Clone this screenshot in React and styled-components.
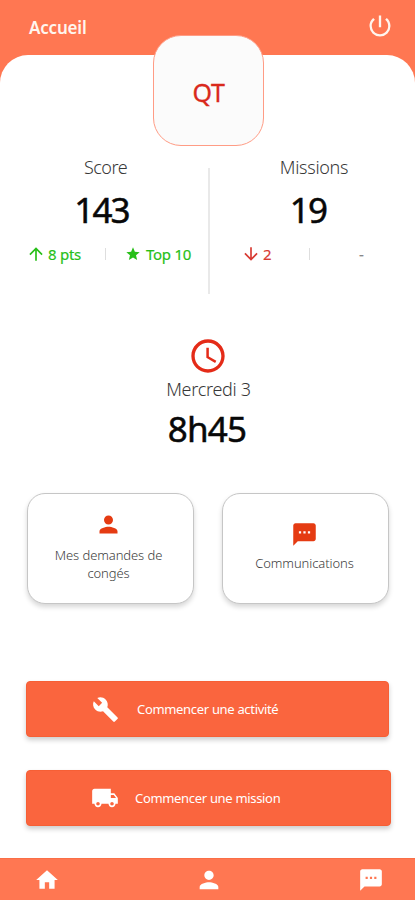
import React from "react";
import styled, { createGlobalStyle } from "styled-components";
import {
  MdPowerSettingsNew, MdArrowUpward, MdArrowDownward, MdStar, MdAccessTime,
  MdPerson, MdSms, MdBuild, MdLocalShipping, MdHome,
} from "react-icons/md";

const GlobalStyle = createGlobalStyle`
  * { box-sizing: border-box; }
  body { margin: 0; background: #fff; }
  svg { display: block; flex: none; }
`;

const Screen = styled.div`
  width: 415px;
  height: 900px;
  display: flex;
  flex-direction: column;
  background: #ff7752;
  font-family: "Noto Sans", "Open Sans", sans-serif;
  overflow: hidden;
`;

const Header = styled.header`
  height: 55px;
  flex: none;
  display: flex;
  justify-content: space-between;
  padding: 12px 21px 0 29px;
  color: #fff5ee;
`;

const Title = styled.h1`
  margin: 0;
  font-size: 17px;
  line-height: 31px;
  font-weight: 600;
  letter-spacing: -0.2px;
`;

const Sheet = styled.main`
  position: relative;
  flex: 1;
  display: flex;
  flex-direction: column;
  background: #fff;
  border-radius: 28px 28px 0 0;
`;

const Avatar = styled.div`
  position: absolute;
  top: -20px;
  left: 153px;
  width: 111px;
  height: 111px;
  display: flex;
  align-items: center;
  justify-content: center;
  border: 1px solid #ff9c85;
  border-radius: 28px;
  background: #fbfbfb;
  color: #d9291c;
  font-size: 25px;
  -webkit-text-stroke: 0.3px #d9291c;
  letter-spacing: -0.4px;
  padding-top: 2px;
`;

const Stats = styled.section`
  display: flex;
  height: 126px;
  margin-top: 113px;
`;

const Stat = styled.div`
  width: ${(p) => p.$width}px;
  display: flex;
  flex-direction: column;
  align-items: center;
  margin-top: -14px;
`;

const Divider = styled.div`
  width: 2px;
  background: #e9e9e9;
`;

const Label = styled.div`
  font-size: 18px;
  line-height: 26px;
  font-weight: 300;
  color: #383838;
  letter-spacing: ${(p) => p.$spacing ?? 0}px;
  margin-left: ${(p) => p.$shift ?? 0}px;
`;

const Figure = styled.div`
  font-size: 35px;
  line-height: 44px;
  font-weight: 400;
  -webkit-text-stroke: 0.5px #080808;
  color: #080808;
  letter-spacing: ${(p) => p.$spacing ?? -1.8}px;
  margin-top: ${(p) => p.$gap ?? 8}px;
  margin-right: ${(p) => p.$shift ?? 0}px;
`;

const Trends = styled.div`
  align-self: stretch;
  height: 24px;
  margin-top: 10px;
  display: flex;
  align-items: center;
  color: ${(p) => p.$color};
`;

const Trend = styled.div`
  width: ${(p) => p.$width}px;
  display: flex;
  align-items: center;
  gap: ${(p) => p.$gap ?? 2}px;
  padding-left: ${(p) => p.$inset}px;
  font-size: 15px;
  line-height: 24px;
  -webkit-text-stroke: 0.2px currentColor;
  letter-spacing: -0.25px;
  white-space: nowrap;
`;

const Tick = styled.div`
  width: 1px;
  height: 12px;
  background: #dedede;
`;

const Neutral = styled.span`
  color: #888;
`;

const Clock = styled.section`
  display: flex;
  flex-direction: column;
  align-items: center;
  height: 114px;
  margin-top: 42px;
  color: #e42b18;
`;

const Cards = styled.section`
  display: grid;
  grid-template-columns: 167px 167px;
  gap: 28px;
  margin: 43px 0 0 27px;
`;

const Card = styled.button`
  height: 111px;
  padding: ${(p) => p.$top}px ${(p) => p.$right}px 0 20px;
  display: flex;
  flex-direction: column;
  align-items: center;
  gap: ${(p) => p.$gap}px;
  border: 1px solid #c6c6c6;
  border-radius: 18px;
  background: #fff;
  box-shadow: 0 3px 5px rgba(0, 0, 0, 0.16);
  color: #e53b12;
  font-family: inherit;
`;

const CardText = styled.span`
  font-size: 13px;
  line-height: 18px;
  color: #3c3c3c;
  font-weight: 300;
  letter-spacing: -0.08px;
  white-space: nowrap;
`;

const Actions = styled.section`
  display: flex;
  flex-direction: column;
  gap: 33px;
  margin: 77px 0 0 26px;
`;

const Action = styled.button`
  width: ${(p) => p.$width}px;
  height: 56px;
  display: flex;
  align-items: center;
  gap: ${(p) => p.$gap}px;
  padding: 0 0 0 ${(p) => p.$inset}px;
  border: 1px solid #f65f35;
  border-radius: 4px;
  background: #fa653e;
  box-shadow: 0 3px 5px rgba(0, 0, 0, 0.2);
  color: #fff;
  font-family: inherit;
  font-size: 13px;
  letter-spacing: -0.32px;
`;

const Nav = styled.nav`
  height: 42px;
  flex: none;
  display: flex;
  align-items: center;
  justify-content: space-between;
  padding: 1px 31px 0 34px;
  border-top: 1px solid #fa6e46;
  background: #ff7752;
  color: #fff;
`;

export default function App() {
  return (
    <Screen>
      <GlobalStyle />
      <Header>
        <Title>Accueil</Title>
        <MdPowerSettingsNew size={28} />
      </Header>
      <Sheet>
        <Avatar>QT</Avatar>
        <Stats>
          <Stat $width={208}>
            <Label $spacing={-0.5} $shift={3}>Score</Label>
            <Figure $shift={5}>143</Figure>
            <Trends $color="#27bf18">
              <Trend $width={105} $inset={26}><MdArrowUpward size={20} />8 pts</Trend>
              <Tick />
              <Trend $width={102} $inset={19} $gap={5}><MdStar size={16} />Top 10</Trend>
            </Trends>
          </Stat>
          <Divider />
          <Stat $width={205}>
            <Label $spacing={-0.3} $shift={3}>Missions</Label>
            <Figure $shift={9}>19</Figure>
            <Trends $color="#d83a32">
              <Trend $width={99} $inset={31}><MdArrowDownward size={20} />2</Trend>
              <Tick />
              <Trend $width={105} $inset={49}><Neutral>-</Neutral></Trend>
            </Trends>
          </Stat>
        </Stats>
        <Clock>
          <MdAccessTime size={40} />
          <Label $spacing={-0.3} $shift={2}>Mercredi 3</Label>
          <Figure $gap={5} $spacing={-0.8} $shift={1}>8h45</Figure>
        </Clock>
        <Cards>
          <Card $top={17} $gap={8} $right={24}>
            <MdPerson size={27} />
            <CardText>Mes demandes de<br />congés</CardText>
          </Card>
          <Card $top={27} $gap={6} $right={22}>
            <MdSms size={27} />
            <CardText>Communications</CardText>
          </Card>
        </Cards>
        <Actions>
          <Action $width={363} $inset={65} $gap={18}>
            <MdBuild size={27} />Commencer une activité
          </Action>
          <Action $width={365} $inset={64} $gap={16}>
            <MdLocalShipping size={28} />Commencer une mission
          </Action>
        </Actions>
      </Sheet>
      <Nav>
        <MdHome size={26} />
        <MdPerson size={28} />
        <MdSms size={26} />
      </Nav>
    </Screen>
  );
}
